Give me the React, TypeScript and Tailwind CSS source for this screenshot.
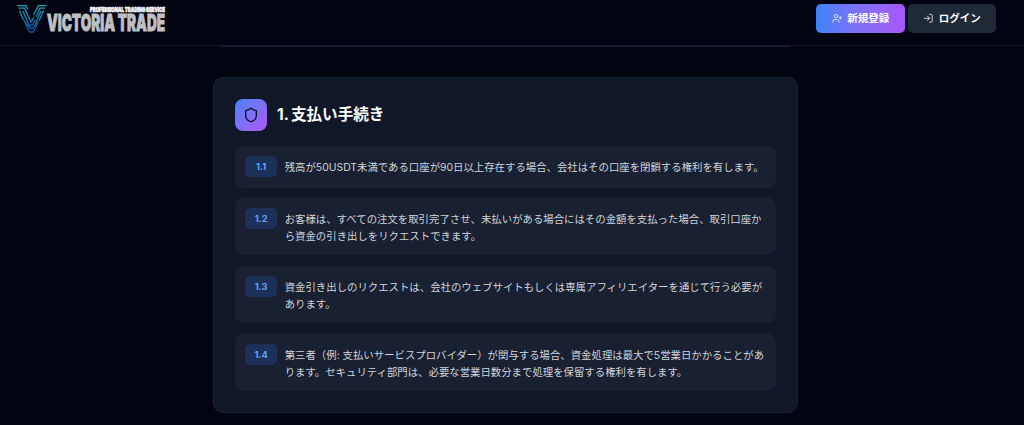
import { LogIn, Shield, UserPlus } from "lucide-react";

const terms = [
  {
    id: "1.1",
    lines: ["残高が50USDT未満である口座が90日以上存在する場合、会社はその口座を閉鎖する権利を有します。"],
  },
  {
    id: "1.2",
    lines: [
      "お客様は、すべての注文を取引完了させ、未払いがある場合にはその金額を支払った場合、取引口座か",
      "ら資金の引き出しをリクエストできます。",
    ],
  },
  {
    id: "1.3",
    lines: [
      "資金引き出しのリクエストは、会社のウェブサイトもしくは専属アフィリエイターを通じて行う必要が",
      "あります。",
    ],
  },
  {
    id: "1.4",
    lines: [
      "第三者（例: 支払いサービスプロバイダー）が関与する場合、資金処理は最大で5営業日かかることがあ",
      "ります。セキュリティ部門は、必要な営業日数分まで処理を保留する権利を有します。",
    ],
  },
];

function Logo() {
  return (
    <svg width="160" height="40" viewBox="0 0 160 40" className="block overflow-visible">
      <defs>
        <linearGradient id="mark" x1="0" y1="5" x2="0" y2="33" gradientUnits="userSpaceOnUse">
          <stop offset="0" stopColor="#25a5ae" />
          <stop offset="0.5" stopColor="#1680ad" />
          <stop offset="1" stopColor="#1746a0" />
        </linearGradient>
      </defs>
      <g fill="none" stroke="url(#mark)" strokeWidth="1.3">
        <path d="M1 5.6H10L12 9.5" />
        <path d="M2.5 8.2H8.5L15 22L18 17" />
        <path d="M3.5 10.5L7 19L9 22" />
        <path d="M7 11L13 25.5L16.5 25L19 20" />
        <path d="M30.5 5.6H22.5L17.5 15" />
        <path d="M29 8.2H24L20 17" />
        <path d="M27.5 10.5L23 21" />
        <path d="M25 11L18.5 26L16 29L10 24" />
        <path d="M8.5 21L13.5 32H17.5L22 22" />
      </g>
      <text
        x="74"
        y="12"
        textLength="75"
        lengthAdjust="spacingAndGlyphs"
        fill="#f3f4f6"
        stroke="#f3f4f6"
        strokeWidth="0.7"
        className="font-['Inter',sans-serif] text-[6.6px] font-black"
      >
        PROFESSIONAL TRADING SERVICE
      </text>
      <text
        x="31"
        y="31"
        textLength="118"
        lengthAdjust="spacingAndGlyphs"
        fill="#bfc0c3"
        stroke="#bfc0c3"
        strokeWidth="0.9"
        className="font-['Inter',sans-serif] text-[23px] font-black"
      >
        VICTORIA TRADE
      </text>
    </svg>
  );
}

function Header() {
  return (
    <header className="flex h-[46px] items-start justify-between border-b border-[#101828] pl-4 pr-7">
      <Logo />
      <div className="flex gap-[3px] pt-1">
        <button className="flex h-[29px] w-[89px] items-center justify-center gap-[5px] rounded-[5px] bg-linear-to-r from-[#3b82f6] to-[#a855f7] text-[10.5px] font-bold text-white">
          <UserPlus className="h-[10.5px] w-[10.5px] opacity-80" />
          新規登録
        </button>
        <button className="flex h-[29px] w-[88px] items-center justify-center gap-[5px] rounded-[5px] bg-[#1f2937] text-[10.5px] font-bold text-white">
          <LogIn className="h-[10.5px] w-[10.5px] opacity-90" />
          ログイン
        </button>
      </div>
    </header>
  );
}

export default function App() {
  return (
    <div className="h-[425px] overflow-hidden bg-[#020412] font-['Inter','Noto_Sans_CJK_JP',sans-serif]">
      <Header />
      <main className="ml-[213px] w-[585px]">
        <div className="mx-2 -mt-px h-[2px] bg-[#141d2d]" />
        <section className="mt-[30px] h-[336px] rounded-[10px] border border-[#1a2335] bg-[#0f1729] px-[21px] pt-[21px]">
          <div className="flex items-center gap-[10px]">
            <div className="flex h-8 w-8 items-center justify-center rounded-[8px] bg-linear-to-br from-[#3b82f6] to-[#a855f7] text-[#0b1023]">
              <Shield className="h-4 w-4" />
            </div>
            <h2 className="text-[15.6px] font-bold leading-6 tracking-[-0.05px] text-white [word-spacing:-1px]">1. 支払い手続き</h2>
          </div>
          <div className="mt-[15px] flex flex-col gap-[10.4px]">
            {terms.map((term) => (
              <div key={term.id} className="flex items-start gap-[8px] rounded-[8px] bg-[#182032] p-[10.4px]">
                <span className="flex h-[20.9px] w-[31.3px] shrink-0 items-center justify-center rounded-[5px] bg-[#1d3158] text-[9.2px] font-bold text-[#60a5fa]">
                  {term.id}
                </span>
                <p className="whitespace-nowrap pt-[2.6px] text-[10.4px] leading-[17px] text-[#d1d5db]">
                  {term.lines.map((line) => (
                    <span key={line} className="block">
                      {line}
                    </span>
                  ))}
                </p>
              </div>
            ))}
          </div>
        </section>
      </main>
    </div>
  );
}
